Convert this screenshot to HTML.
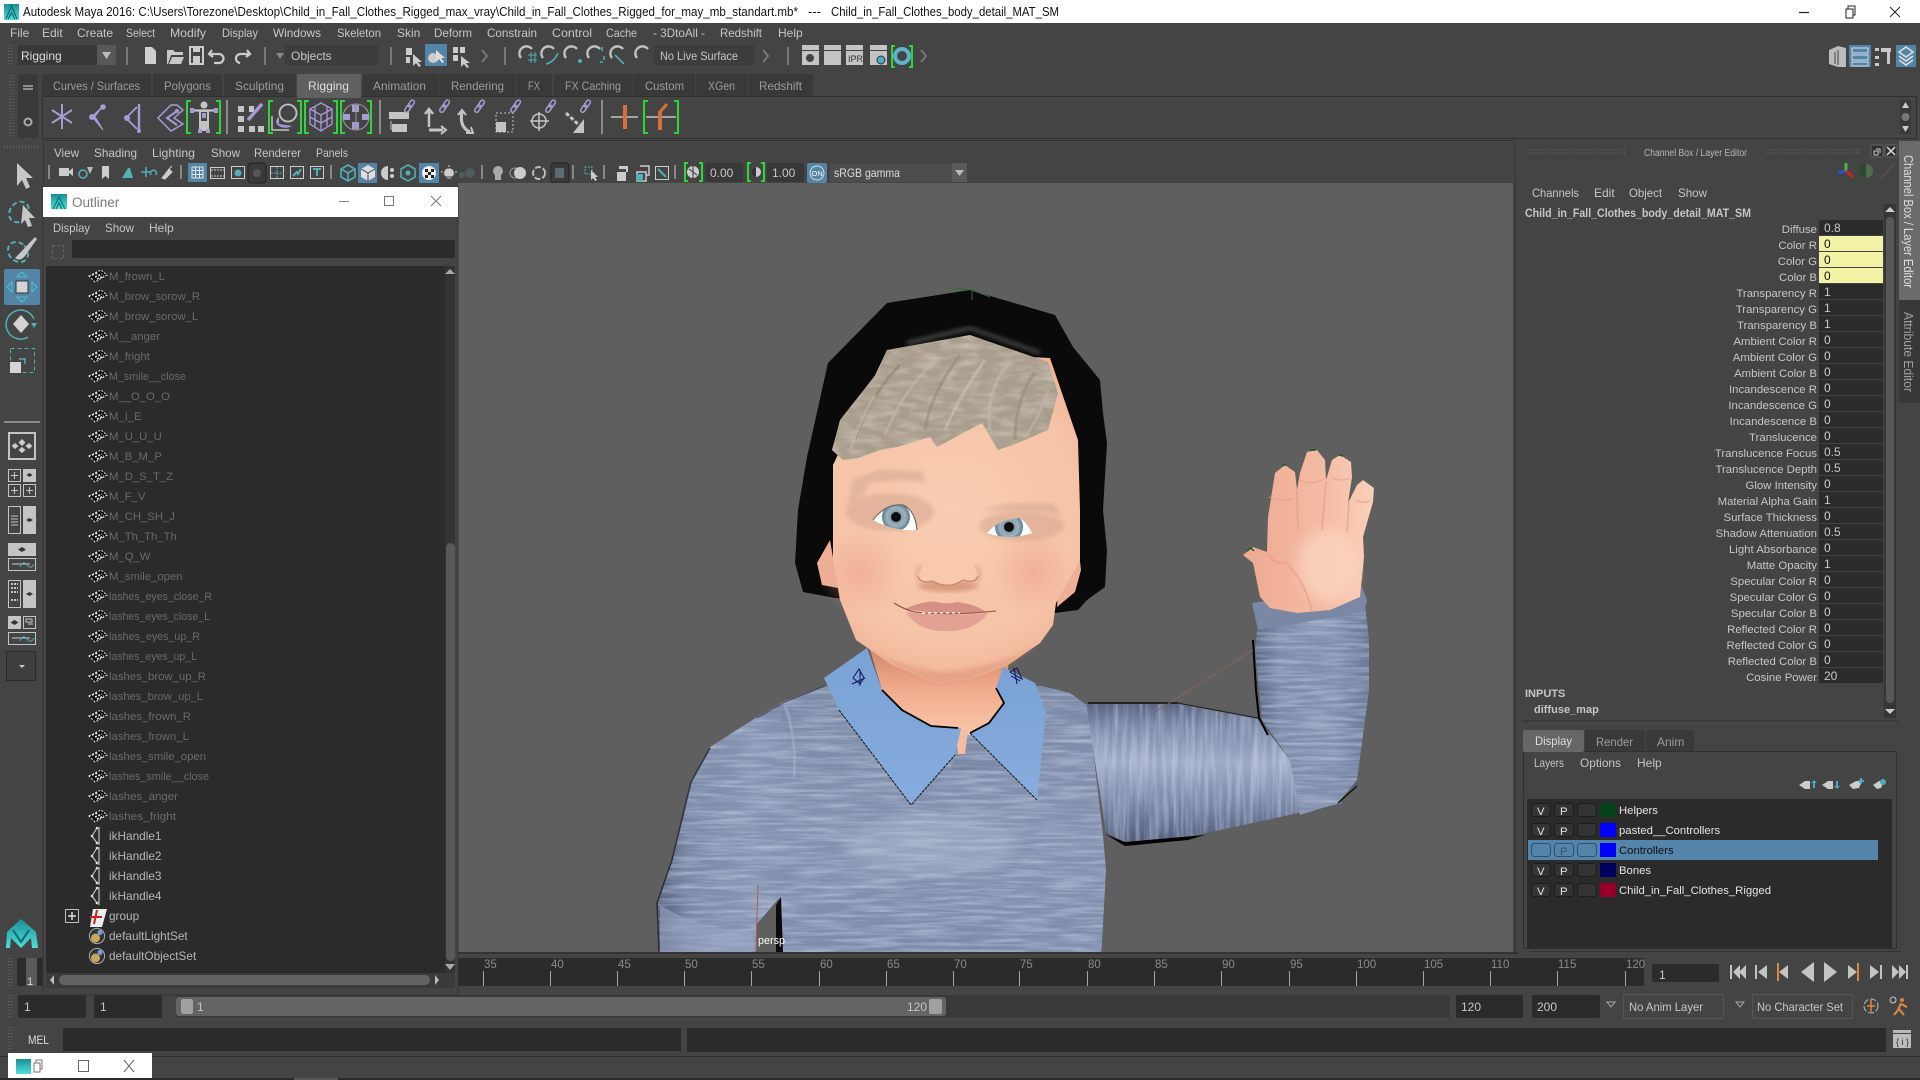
<!DOCTYPE html>
<html lang="en"><head><meta charset="utf-8"><title>Autodesk Maya 2016</title>
<style>
html,body{margin:0;padding:0;background:#444;width:1920px;height:1080px;overflow:hidden}
svg{position:absolute;left:0;top:0;font-family:"Liberation Sans",sans-serif;font-size:12px}
text{fill:#c6c6c6;white-space:pre}
.t{fill:#9c9c9c}.d{fill:#6a6a6a;font-size:11.3px}.o{fill:#b6b6b6;font-size:11.8px}.n{fill:#8a8a8a;font-size:11.5px}.k{fill:#e4e4e4;font-size:11.3px}.v{fill:#c8c8c8}.lb{font-size:11.4px}
.g{fill:none;stroke:#c4c4c4;stroke-width:2}.l{fill:none;stroke:#a79bd6;stroke-width:2}.c{fill:none;stroke:#4fb0b8;stroke-width:1.6}.br{fill:none;stroke:#2fd63a;stroke-width:2}.s{stroke:#777;stroke-width:2;fill:none}.h{stroke:#6d6d6d;stroke-width:1;stroke-dasharray:1 2;fill:none}
</style></head><body>
<svg width="1920" height="1080" viewBox="0 0 1920 1080" xmlns="http://www.w3.org/2000/svg">
<defs>
<filter id="knit" x="0" y="0" width="1" height="1" color-interpolation-filters="sRGB"><feTurbulence type="fractalNoise" baseFrequency="0.02 0.28" numOctaves="3" seed="5"/><feColorMatrix values="0 0 0 0 .82 0 0 0 0 .85 0 0 0 0 .93 1.1 0 0 0 -.42"/><feComposite in2="SourceAlpha" operator="in"/><feBlend in2="SourceGraphic" mode="normal"/></filter>
<filter id="knitv" x="0" y="0" width="1" height="1" color-interpolation-filters="sRGB"><feTurbulence type="fractalNoise" baseFrequency="0.22 0.015" numOctaves="3" seed="9"/><feColorMatrix values="0 0 0 0 .82 0 0 0 0 .85 0 0 0 0 .93 1.1 0 0 0 -.42"/><feComposite in2="SourceAlpha" operator="in"/><feBlend in2="SourceGraphic" mode="normal"/></filter>
<filter id="hairf" x="0" y="0" width="1" height="1" color-interpolation-filters="sRGB"><feTurbulence type="fractalNoise" baseFrequency="0.05 0.16" numOctaves="2" seed="3"/><feColorMatrix values="0 0 0 0 .85 0 0 0 0 .81 0 0 0 0 .76 1.2 0 0 0 -.46"/><feComposite in2="SourceAlpha" operator="in"/><feBlend in2="SourceGraphic" mode="normal"/></filter>
<filter id="bl"><feGaussianBlur stdDeviation="6"/></filter>
<filter id="bl2"><feGaussianBlur stdDeviation="2"/></filter>
<linearGradient id="torso2" x1="0" x2="0" y1="0" y2="1"><stop offset="0" stop-color="#7b89a6"/><stop offset=".55" stop-color="#8593b0"/><stop offset="1" stop-color="#7e8cab"/></linearGradient>
<linearGradient id="arm" x1="0" x2="0" y1="0" y2="1"><stop offset="0" stop-color="#5a6684"/><stop offset=".16" stop-color="#7c8aa8"/><stop offset=".42" stop-color="#9fabc6"/><stop offset=".72" stop-color="#7a88a7"/><stop offset="1" stop-color="#4e5a78"/></linearGradient>
<linearGradient id="fore" x1="0" x2="1" y1="0" y2="0"><stop offset="0" stop-color="#5a6684"/><stop offset=".22" stop-color="#7f8dab"/><stop offset=".7" stop-color="#8391af"/><stop offset="1" stop-color="#6a789a"/></linearGradient>
<linearGradient id="larm" x1="0" x2="1" y1="0" y2="0"><stop offset="0" stop-color="#515d7a"/><stop offset=".22" stop-color="#7a88a6"/><stop offset=".7" stop-color="#8896b3"/><stop offset="1" stop-color="#818fad"/></linearGradient>
<linearGradient id="coll" x1="0" x2="0" y1="0" y2="1"><stop offset="0" stop-color="#7aa2d4"/><stop offset="1" stop-color="#87acdd"/></linearGradient>
<radialGradient id="skin" gradientUnits="userSpaceOnUse" cx="950" cy="510" r="190"><stop offset="0" stop-color="#f8cdb2"/><stop offset=".7" stop-color="#f6c3a6"/><stop offset="1" stop-color="#eeb093"/></radialGradient>
<radialGradient id="cheek"><stop offset="0" stop-color="#ec9c88" stop-opacity=".5"/><stop offset="1" stop-color="#ec9c88" stop-opacity="0"/></radialGradient>
<radialGradient id="iris"><stop offset="0" stop-color="#5f7a8c"/><stop offset=".65" stop-color="#9db2c0"/><stop offset="1" stop-color="#5e7c90"/></radialGradient>
<linearGradient id="neck" x1="0" x2="0" y1="0" y2="1"><stop offset="0" stop-color="#cf7f64"/><stop offset=".5" stop-color="#f0a98c"/><stop offset="1" stop-color="#f9c7a8"/></linearGradient>
<linearGradient id="hand" x1="0" x2="1" y1="0" y2="0"><stop offset="0" stop-color="#eea991"/><stop offset=".6" stop-color="#f4bba4"/><stop offset="1" stop-color="#fbcfb8"/></linearGradient>
<linearGradient id="logo" x1="0" x2="0" y1="0" y2="1"><stop offset="0" stop-color="#1a8f9a"/><stop offset="1" stop-color="#4fe0d8"/></linearGradient>
<pattern id="rows" width="64" height="16" patternUnits="userSpaceOnUse" x="1819" y="220"><rect width="64" height="15" fill="#2b2b2b"/></pattern>
<clipPath id="eL"><path d="M873 520Q886 503 903 505Q915 510 917 530Q895 532 873 520z"/></clipPath>
<clipPath id="eR"><path d="M987 533Q1000 518 1020 518Q1028 524 1032 533Q1010 541 987 533z"/></clipPath>
<g id="m"><path d="M-9 0L3 -6L9 -1L-3 6z" fill="#111" stroke="#eee" stroke-width="1" stroke-dasharray="2 1.5"/><path d="M-6 -1L0 -3M-3 1L4 -2M-1 3L6 0" stroke="#e8e8e8" stroke-width="1.6" stroke-dasharray="2 1.5"/></g>
<g id="ik"><path d="M-1 -8L-6 0L-1 7M1 -9V9" fill="none" stroke="#ccc" stroke-width="1.1"/><circle cx="-6" cy="0" r="1.3" fill="#ddd"/><circle cx="-1" cy="-8" r="1.3" fill="#ddd"/><circle cx="-1" cy="7" r="1.3" fill="#ddd"/></g>
<g id="set"><circle r="7.6" fill="#333" stroke="#aaa"/><circle cx="-1.5" cy="2" r="4.5" fill="#c9a65c"/><circle cx="3" cy="-3.5" r="2.6" fill="#6d9fd1"/></g>
<g id="mag"><path d="M-6 4A7 7 0 1 1 5 -5" fill="none" stroke="#c0c0c0" stroke-width="2.4"/></g>
<g id="link"><rect x="-2" y="-8" width="4" height="8" rx="2" transform="rotate(35)" fill="none" stroke="#a79bd6" stroke-width="1.5"/><rect x="-2" y="-2" width="4" height="8" rx="2" transform="rotate(35)" fill="none" stroke="#a79bd6" stroke-width="1.5"/></g>
</defs>

<rect width="1920" height="1080" fill="#444"/>

<!-- Title bar -->
<rect width="1920" height="23" fill="#fff"/>
<rect x="4" y="4" width="15" height="16" fill="url(#logo)"/><path d="M6 19L11.500 6L17 19M8 19L11.500 13L15 19" fill="none" stroke="#0a5b66"/>
<text x="23" y="16" style="fill:#111;font-size:13px" textLength="775" lengthAdjust="spacingAndGlyphs">Autodesk Maya 2016: C:\Users\Torezone\Desktop\Child_in_Fall_Clothes_Rigged_max_vray\Child_in_Fall_Clothes_Rigged_for_may_mb_standart.mb*</text>
<text x="808" y="16" style="fill:#111;font-size:13px">---</text>
<text x="831" y="16" style="fill:#111;font-size:13px" textLength="228" lengthAdjust="spacingAndGlyphs">Child_in_Fall_Clothes_body_detail_MAT_SM</text>
<path d="M1799 12.500h10" stroke="#222" stroke-width="1.200"/>
<path d="M1846 9h7v9h-7zM1848 9V6h7v9h-2" fill="none" stroke="#222"/>
<path d="M1890 7l10 10M1900 7l-10 10" stroke="#222"/>

<!-- Menu -->
<g>
<text x="10" y="37">File</text><text x="42" y="37">Edit</text><text x="77" y="37">Create</text><text x="126" y="37" textLength="29" lengthAdjust="spacingAndGlyphs">Select</text><text x="170" y="37" textLength="36" lengthAdjust="spacingAndGlyphs">Modify</text><text x="222" y="37" textLength="36" lengthAdjust="spacingAndGlyphs">Display</text><text x="273" y="37" textLength="48" lengthAdjust="spacingAndGlyphs">Windows</text><text x="337" y="37" textLength="44" lengthAdjust="spacingAndGlyphs">Skeleton</text><text x="397" y="37">Skin</text><text x="434" y="37" textLength="38" lengthAdjust="spacingAndGlyphs">Deform</text><text x="487" y="37" textLength="50" lengthAdjust="spacingAndGlyphs">Constrain</text><text x="552" y="37" textLength="40" lengthAdjust="spacingAndGlyphs">Control</text><text x="606" y="37" textLength="31" lengthAdjust="spacingAndGlyphs">Cache</text><text x="653" y="37" textLength="52" lengthAdjust="spacingAndGlyphs">- 3DtoAll -</text><text x="720" y="37" textLength="42" lengthAdjust="spacingAndGlyphs">Redshift</text><text x="778" y="37">Help</text>
</g>

<!-- Status line -->
<path class="h" d="M9 45v21M12 45v21"/>
<rect x="18" y="45" width="79" height="20" fill="#383838"/><rect x="97" y="45" width="19" height="20" fill="#585858"/>
<text x="21" y="60" style="fill:#ddd">Rigging</text><path d="M102 52h9l-4.500 7z" fill="#bbb"/>
<path class="s" d="M127 47v18M265 47v18M391 47v18M505 47v18M788 47v18"/>
<path d="M145 47h7l4 4v13h-11z" fill="#d0d0d0"/>
<path d="M167 50h6l2 2h8v3h-12l-3 9h-1zM172 57h12l-3 7h-12z" fill="#c8c8c8"/>
<path d="M190 47h13v17h-13z" fill="none" stroke="#ccc" stroke-width="2"/><rect x="193" y="47" width="7" height="5" fill="#ccc"/><rect x="193" y="56" width="7" height="8" fill="#ccc"/>
<path d="M212 50l-3 4 4 3M210 54h9a4 4 0 0 1 0 9h-5" fill="none" stroke="#ccc" stroke-width="2.200"/>
<path d="M247 50l3 4-4 3M249 54h-8a4 4 0 0 0-1 9" fill="none" stroke="#ccc" stroke-width="2.200"/>
<path d="M276 53h8l-4 6z" fill="#888"/>
<rect x="285" y="45" width="93" height="20" fill="#3d3d3d"/><text x="291" y="60">Objects</text>
<path d="M406 48h6v7h-6zM406 57h4v6h-4z" fill="#ccc"/><path d="M413 54l0 12 3-3 3 4 2-1-3-4h4z" fill="#ccc"/>
<rect x="425" y="44" width="22" height="22" fill="#5285a6"/><circle cx="433" cy="58" r="5" fill="#ccc"/><path d="M436 50l0 12 3-3 3 4 2-1-3-4h4z" fill="#ddd"/>
<path d="M453 47h5v6h-5zM460 47h5v6h-5zM453 55h5v6h-5z" fill="#ccc"/><path d="M461 56l0 11 3-3 3 4 2-1-3-4h4z" fill="#ccc"/>
<path d="M482 50l5 6-5 6" class="s"/>
<use href="#mag" x="527" y="54"/><path d="M528 55h9M528 60h9M531 52v11M535 52v11" stroke="#4fb0b8"/>
<use href="#mag" x="549" y="54"/><path d="M546 64q8-2 12-11" class="c"/>
<use href="#mag" x="572" y="54"/><circle cx="580" cy="61" r="2" fill="#4fb0b8"/>
<use href="#mag" x="595" y="54"/><path d="M602 47v4M604 56v4M600 62h3" stroke="#4fb0b8" stroke-width="1.500"/>
<use href="#mag" x="618" y="54"/><path d="M615 55l9 9" class="c"/>
<use href="#mag" x="643" y="54"/>
<rect x="654" y="45" width="100" height="20" fill="#3d3d3d"/><text x="660" y="60" textLength="78" lengthAdjust="spacingAndGlyphs">No Live Surface</text>
<path d="M763 50l5 6-5 6" class="s"/>
<g fill="#c4c4c4"><rect x="802" y="45" width="17" height="5"/><rect x="802" y="51" width="17" height="14"/><rect x="824" y="45" width="17" height="5"/><rect x="824" y="51" width="17" height="14"/><rect x="846" y="45" width="17" height="5"/><rect x="846" y="51" width="17" height="14"/><rect x="870" y="45" width="17" height="5"/><rect x="870" y="51" width="17" height="14"/></g>
<circle cx="810" cy="58" r="4" fill="#444"/><text x="848" y="62" style="fill:#333;font-size:9px">IPR</text><circle cx="881" cy="60" r="4" fill="#4fa9c9" stroke="#333"/>
<circle cx="902" cy="56" r="7" fill="none" stroke="#5fb0c9" stroke-width="4"/><path class="br" d="M895 46h-3v21h3M909 46h3v21h-3"/>
<path d="M921 50l5 6-5 6" class="s"/>
<!-- right status icons -->
<path d="M1829 50l9-4 8 2v19h-8l-9-3z" fill="#bcbcbc"/><path d="M1835 52v12M1838 50v15" stroke="#444"/>
<rect x="1849" y="45" width="22" height="22" fill="#5285a6"/><path d="M1852 48h16v5h-16zM1852 55h16v5h-16zM1852 62h16v4h-16z" fill="none" stroke="#dde"/>
<path d="M1875 48h4v3h-4zM1875 56h4v3h-4zM1875 63h4v3h-4zM1881 48h10v4h-10zM1887 52h3v12h-3z" fill="#c8c8c8"/>
<rect x="1896" y="45" width="20" height="22" fill="#5285a6"/><path d="M1906 47l7 5-7 5-7-5zM1899 56l7 5 7-5M1899 60l7 5 7-5" fill="none" stroke="#ddd" stroke-width="1.600"/>

<!-- Shelf -->
<rect x="18" y="74" width="20" height="64" fill="#3a3a3a"/>
<path class="h" d="M10 75v62M13 75v62"/>
<path d="M23 86h10M23 89h10" stroke="#aaa" stroke-width="1.500"/><circle cx="28" cy="122" r="3.500" fill="none" stroke="#aaa" stroke-width="2"/>
<g fill="#393939">
<rect x="42" y="74" width="109" height="22"/><rect x="153" y="74" width="69" height="22"/><rect x="224" y="74" width="72" height="22"/><rect x="363" y="74" width="75" height="22"/><rect x="439" y="74" width="77" height="22"/><rect x="517" y="74" width="35" height="22"/><rect x="554" y="74" width="79" height="22"/><rect x="634" y="74" width="61" height="22"/><rect x="696" y="74" width="52" height="22"/><rect x="749" y="74" width="64" height="22"/>
</g>
<rect x="297" y="74" width="64" height="23" fill="#606060"/>
<g>
<text class="t" x="53" y="90" textLength="87" lengthAdjust="spacingAndGlyphs">Curves / Surfaces</text><text class="t" x="164" y="90" textLength="47" lengthAdjust="spacingAndGlyphs">Polygons</text><text class="t" x="235" y="90" textLength="49" lengthAdjust="spacingAndGlyphs">Sculpting</text><text x="308" y="90" style="fill:#ddd" textLength="41" lengthAdjust="spacingAndGlyphs">Rigging</text><text class="t" x="373" y="90" textLength="53" lengthAdjust="spacingAndGlyphs">Animation</text><text class="t" x="451" y="90" textLength="53" lengthAdjust="spacingAndGlyphs">Rendering</text><text class="t" x="528" y="90" textLength="12" lengthAdjust="spacingAndGlyphs">FX</text><text class="t" x="565" y="90" textLength="56" lengthAdjust="spacingAndGlyphs">FX Caching</text><text class="t" x="645" y="90" textLength="39" lengthAdjust="spacingAndGlyphs">Custom</text><text class="t" x="708" y="90" textLength="27" lengthAdjust="spacingAndGlyphs">XGen</text><text class="t" x="759" y="90" textLength="43" lengthAdjust="spacingAndGlyphs">Redshift</text></g>
<rect x="42.500" y="96.500" width="1874" height="42" fill="#444" stroke="#303030"/>
<rect x="297" y="96" width="64" height="2" fill="#606060"/>
<rect x="1900" y="100" width="11" height="34" fill="#3a3a3a"/><path d="M1902 108l3.500-6 3.500 6zM1902 126h7l-3.500 6z" fill="#ccc"/><circle cx="1905.500" cy="117" r="4" fill="#777"/>
<!-- shelf icons -->
<path class="l" d="M62 104v25M52 110l20 13M72 110l-20 13"/>
<path d="M103 106L92 116.500L103 130L95 116.500z" fill="#a79bd6" stroke="#a79bd6"/><circle cx="103" cy="107" r="2.800" fill="#a79bd6"/><circle cx="92" cy="117" r="3" fill="#a79bd6"/>
<path d="M139 104v28" stroke="#a79bd6" stroke-width="2.400"/><path d="M137 107L126 118L137 129" fill="none" stroke="#a79bd6" stroke-width="1.800"/><circle cx="127" cy="118" r="3" fill="#a79bd6"/><circle cx="139" cy="131" r="2" fill="#a79bd6"/>
<path d="M171 105L158 118L171 131L183 124L174 118L183 110L177 105z" fill="none" stroke="#a79bd6" stroke-width="1.500"/><path d="M177 111L167 118L177 125" fill="none" stroke="#a79bd6" stroke-width="2"/><circle cx="177" cy="111" r="2" fill="#a79bd6"/>
<path class="br" d="M191 101h-4v32h4M216 101h4v32h-4"/><circle cx="204" cy="105" r="3.500" fill="#c4c4c4"/><path d="M190 110.500h28" stroke="#c4c4c4" stroke-width="2.200"/><path d="M190 108h4v5h-4zM214 108h4v5h-4z" fill="#a79bd6"/><rect x="200" y="111" width="8" height="11" fill="none" stroke="#c4c4c4" stroke-width="2"/><rect x="202" y="113" width="4" height="5" fill="#a79bd6"/><path d="M199 122h10v9h-10z" fill="#c4c4c4"/><path d="M198 129h4v4h-4zM206 129h4v4h-4z" fill="#a79bd6"/>
<path class="s" d="M227 100v34M380 100v34M602 100v34" style="stroke:#8a8a8a"/>
<g fill="#c4c4c4"><rect x="238" y="106" width="6" height="6"/><rect x="249" y="106" width="5" height="6"/><rect x="238" y="116" width="6" height="6"/><rect x="238" y="126" width="6" height="6"/><rect x="249" y="126" width="6" height="6"/><rect x="258" y="126" width="6" height="6"/></g>
<path d="M248 120L262 104" stroke="#a79bd6" stroke-width="3.500"/>
<path class="br" d="M273 101h-4v32h4M297 101h4v32h-4"/><circle cx="288" cy="113" r="8.500" fill="none" stroke="#c4c4c4" stroke-width="1.800"/><path d="M279 117a9 6 0 0 0 13 9l-13-2z" fill="#a79bd6"/><path d="M272 116v14h17" fill="none" stroke="#c4c4c4" stroke-width="1.500"/>
<path class="br" d="M309 101h-4v32h4M333 101h4v32h-4"/><path d="M321 103l11 6v15l-11 7-11-7v-15zM310 109l11 6 11-6M321 115v16M310 117l11 6 11-6M315 106v20M327 106v20" fill="none" stroke="#a79bd6" stroke-width="1.300"/>
<path class="br" d="M345 101h-4v32h4M367 101h4v32h-4"/><circle cx="356" cy="117" r="13" fill="none" stroke="#999" stroke-width="1.100"/><path d="M352 105h7v7h-7zM343 114h7v6h-7zM362 114h7v6h-7zM352 122h7v7h-7z" fill="#a79bd6"/><path d="M356 104v26" stroke="#999"/>
<path d="M389 112h20v7h-20zM392 124h15v8h-15z" fill="#c4c4c4"/><path d="M391 121v9" stroke="#c4c4c4"/><use href="#link" x="409" y="107"/>
<path d="M429 127v-16M425 114l4-5 4 5" class="g" style="stroke-width:2.500"/><path d="M429 130h14" class="g" style="stroke-width:3"/><path d="M441 126l5 4-5 4" class="g"/><use href="#link" x="444" y="107"/>
<path d="M462 112q-3 15 8 20" class="g" style="stroke-width:3"/><path d="M466 133l7 0-2-6" class="g"/><path d="M458 115l4-5 4 5" class="g"/><use href="#link" x="479" y="107"/>
<rect x="496" y="113" width="17" height="19" fill="none" stroke="#c4c4c4" stroke-dasharray="2 2"/><rect x="496" y="122" width="10" height="10" fill="#c4c4c4"/><use href="#link" x="515" y="107"/>
<circle cx="539" cy="121" r="7" class="g" style="stroke-width:1.500"/><path d="M539 112v19M530 121h19" stroke="#c4c4c4" stroke-width="1.500"/><use href="#link" x="550" y="107"/>
<path d="M566 113l13 12" class="g" style="stroke-width:3" stroke-dasharray="4 2"/><path d="M584 119v14h-11z" fill="#c4c4c4"/><use href="#link" x="585" y="107"/>
<path d="M611 117h27" stroke="#c4c4c4" stroke-width="1.500"/><path d="M625 105v24" stroke="#d86f3a" stroke-width="4"/>
<path class="br" d="M648 101h-4v32h4M674 101h4v32h-4"/><path d="M646 117h30" stroke="#c4c4c4" stroke-width="1.500"/><path d="M660 111v19" stroke="#d86f3a" stroke-width="4"/><path d="M659 113l8-9" stroke="#d86f3a" stroke-width="3"/>

<!-- Panel bar -->
<path d="M43.500 141V187" stroke="#333"/>
<path d="M44 140.500H1513" stroke="#333"/>
<path class="h" d="M4 146h36M4 148h36"/>
<text x="54" y="157" textLength="25" lengthAdjust="spacingAndGlyphs">View</text><text x="94" y="157" textLength="43" lengthAdjust="spacingAndGlyphs">Shading</text><text x="152" y="157" textLength="43" lengthAdjust="spacingAndGlyphs">Lighting</text><text x="211" y="157" textLength="29" lengthAdjust="spacingAndGlyphs">Show</text><text x="254" y="157" textLength="47" lengthAdjust="spacingAndGlyphs">Renderer</text><text x="316" y="157" textLength="32" lengthAdjust="spacingAndGlyphs">Panels</text>
<path d="M49 165v14M181 165v14M331 165v14M482 165v14M573 165v14M604 165v14M675 165v14" stroke="#888" stroke-width="2"/>
<path d="M59 168h10v8h-10zM69 171l4-3v8l-4-3z" fill="#ccc"/>
<circle cx="83" cy="174" r="4" class="c"/><path d="M87 167h6l-3 7z" fill="#bbb"/>
<path d="M102 166h7v13l-3.500-3-3.500 3z" fill="#ccc"/>
<path d="M122 178h11l-3-10h-2zM127 166l-4 13" fill="#4fb0b8"/>
<path d="M141 172h10M146 167v10M151 175a3 3 0 1 1 5 0" class="c"/>
<path d="M162 178l7-9 3 3-7 7zM172 166l-4 4" fill="#ccc" stroke="#ccc"/>
<rect x="188" y="163" width="19" height="19" fill="#5285a6"/><path d="M192 167h11v11h-11zM192 170.500h11M192 174.500h11M195.500 167v11M199.500 167v11" fill="none" stroke="#e5e5e5"/>
<rect x="210.500" y="167.500" width="14" height="11" fill="none" stroke="#ccc"/><path d="M211 170h13M211 176h13" stroke="#ccc" stroke-dasharray="2 1"/>
<rect x="231.500" y="166.500" width="13" height="12" fill="none" stroke="#ccc"/><circle cx="238" cy="173" r="3.500" fill="#4fb0b8"/>
<rect x="248" y="163" width="18" height="20" rx="3" fill="#3a3a3a" stroke="#222"/><circle cx="257" cy="173" r="4" fill="#555"/>
<rect x="270.500" y="166.500" width="13" height="12" fill="none" stroke="#ccc"/><path d="M271 173h13M277 167v12" stroke="#4fb0b8" stroke-dasharray="2 1"/>
<rect x="290.500" y="166.500" width="13" height="12" fill="none" stroke="#ccc"/><path d="M293 176l4-4 1 2 3-5" stroke="#4fb0b8" stroke-width="2" fill="none"/>
<rect x="310.500" y="166.500" width="13" height="12" fill="none" stroke="#ccc"/><path d="M313 169h8M317 169v7" stroke="#4fb0b8" stroke-width="2"/>
<path d="M348 165l7 4v8l-7 4-7-4v-8zM341 169l7 4 7-4M348 173v8" class="c"/>
<rect x="358" y="163" width="19" height="20" fill="#5285a6"/><path d="M368 165l7 4v8l-7 4-7-4v-8z" fill="#ddd"/><path d="M361 169l7 4 7-4M368 173v8" stroke="#444" fill="none"/>
<path d="M388 166a7 7 0 0 0 0 14z" fill="#ccc"/><circle cx="392" cy="170" r="2" fill="#ccc"/><circle cx="392" cy="176" r="2" fill="#ccc"/>
<path d="M408 165l7 4v8l-7 4-7-4v-8z" class="c"/><circle cx="408" cy="173" r="2.500" fill="#4fb0b8"/>
<rect x="419" y="163" width="20" height="20" fill="#5285a6"/><circle cx="429" cy="173" r="7" fill="#eee"/><path d="M425 169h3v3h-3zM431 169h3v3h-3zM428 172h3v3h-3zM425 175h3v3h-3zM431 175h3v3h-3z" fill="#222"/>
<path d="M449 165v2M443 172h-2M457 172h-2M449 169a4 4 0 0 1 3 7h-6a4 4 0 0 1 3-7zM447 178h4" stroke="#ccc" fill="#ccc"/>
<circle cx="470" cy="173" r="5" fill="#4f5a5c"/><circle cx="462" cy="175" r="3" fill="#4f5a5c"/>
<circle cx="498" cy="171" r="5" fill="#aaa"/><rect x="495" y="175" width="6" height="5" fill="#aaa"/>
<circle cx="515" cy="173" r="5" fill="none" stroke="#999"/><circle cx="520" cy="173" r="6" fill="#ccc"/>
<circle cx="539" cy="173" r="6" fill="none" stroke="#bbb" stroke-width="2" stroke-dasharray="6 2"/>
<rect x="551" y="163" width="18" height="20" rx="3" fill="#3a3a3a" stroke="#222"/><rect x="555" y="168" width="9" height="10" fill="#5e6a6e"/>
<path d="M585 167h7v7h-7z" fill="none" stroke="#4fb0b8" stroke-dasharray="2 1"/><path d="M591 170l0 10 2-2 2 3 2-1-2-3h3z" fill="#ccc"/>
<path d="M617 172h9v9h-9zM619 166h9v6h-2v-3h-7z" fill="#ccc"/>
<path d="M637 172h9v9h-9zM640 166h9v9h-3" fill="none" stroke="#ccc" stroke-width="1.500"/><rect x="636" y="174" width="7" height="7" fill="#4fb0b8"/>
<rect x="655.500" y="166.500" width="13" height="13" fill="none" stroke="#ccc"/><path d="M658 169l8 8" stroke="#4fb0b8" stroke-width="2"/>
<circle cx="693" cy="172" r="6" fill="#ccc"/><path d="M689 169l8 6M693 166v12" stroke="#333"/><path class="br" d="M688 163h-3v18h3M699 163h3v18h-3"/>
<rect x="705" y="163" width="38" height="19" rx="2" fill="#383838"/><text x="710" y="177">0.00</text>
<circle cx="756" cy="172" r="5" fill="#ccc"/><path d="M756 167a5 5 0 0 0 0 10z" fill="#333"/><path class="br" d="M751 163h-3v18h3M761 163h3v18h-3"/>
<rect x="767" y="163" width="37" height="19" rx="2" fill="#383838"/><text x="772" y="177">1.00</text>
<rect x="807" y="163" width="20" height="20" rx="2" fill="#5285a6"/><circle cx="817" cy="173" r="7" fill="none" stroke="#ddd"/><text x="811.500" y="176" style="fill:#fff;font-size:7.500px">ON</text>
<rect x="830" y="163" width="122" height="19" fill="#4d4d4d"/><rect x="952" y="163" width="15" height="19" fill="#5a5a5a"/><text x="834" y="177" style="fill:#ddd" textLength="66" lengthAdjust="spacingAndGlyphs">sRGB gamma</text><path d="M955 170h9l-4.500 6z" fill="#bbb"/>

<!-- Viewport -->
<rect x="458" y="183" width="1055" height="769" fill="#5f5f5f"/>

<!-- Character -->
<clipPath id="vp"><rect x="458" y="183" width="1055" height="769"/></clipPath>
<g clip-path="url(#vp)">
<!-- Torso and left arm -->
<path d="M825 686L785 701L757 717L710 747L691 782L672 860L658 903L660 960H1101L1106 870L1103 835L1088 706L1070 693L1042 686z" fill="url(#torso2)" filter="url(#knit)"/>
<path d="M710 748L691 782L672 860L658 903L660 960H752L757 930L775 900L779 860L785 800L792 752L780 712L757 718z" fill="url(#larm)" filter="url(#knit)"/>
<path d="M785 705Q797 740 794 778" stroke="#aab4cb" stroke-width="3" fill="none" opacity=".5"/>
<path d="M660 905Q700 930 755 932L752 960H660z" fill="#98a4bf" opacity=".6"/>
<path d="M780 897L756 925L756 952H776L776 907z" fill="#5f5f5f"/>
<path d="M776 905L781 897L783 952L776 952z" fill="#0b0b0b"/>
<ellipse cx="930" cy="845" rx="85" ry="30" fill="#b3bed4" opacity=".4" filter="url(#bl)"/>
<path d="M955 760H1020Q1000 770 960 770Q945 770 955 760z" fill="#6c7a98" opacity=".5"/>
<path d="M710 748L691 782L672 860L657 903L659 952" fill="none" stroke="#1c2030" stroke-width="1.500" opacity=".8"/>
<path d="M757 718L785 702L825 686" fill="none" stroke="#1c2030" stroke-width="1" opacity=".6"/>
<!-- Raised arm -->
<path d="M1086 704L1178 704L1258 719L1290 760L1342 803L1280 817L1188 837L1125 843L1106 832z" fill="url(#arm)" filter="url(#knitv)"/>
<path d="M1259 612L1364 596L1369 640L1369 690L1357 780L1338 803L1300 815L1290 760L1262 720L1255 650z" fill="url(#fore)" filter="url(#knit)"/>
<path d="M1252 603L1362 587L1367 600L1364 612L1258 630z" fill="#7a88a6"/>
<path d="M1105 834L1125 846L1188 840L1205 835L1125 842z" fill="#000"/>
<path d="M1253 640L1256 690L1259 718L1268 735" fill="none" stroke="#000" stroke-width="2"/>
<path d="M1088 703L1178 703" stroke="#111" stroke-width="1.500"/><path d="M1178 703L1258 718" stroke="#222" stroke-width="1"/>
<path d="M1338 803L1357 786" stroke="#111" stroke-width="1.500"/>
<!-- Hand -->
<path d="M1243 555L1253 547L1267 552L1268 517L1275 473L1285 465L1295 472L1297 490L1300 473L1307 452L1317 450L1325 460L1326 480L1332 460L1340 455L1351 462L1352 477L1348 503L1357 485L1363 480L1374 488L1373 502L1363 537L1364 557L1360 597L1330 610L1297 613L1270 608L1260 597L1253 563z" fill="url(#hand)"/>
<ellipse cx="1328" cy="565" rx="30" ry="35" fill="#fdd8c4" opacity=".7" filter="url(#bl)"/>
<path d="M1267 553Q1275 565 1285 562Q1305 580 1312 612" fill="none" stroke="#e49c83" stroke-width="2" opacity=".6"/>
<path d="M1297 491L1298 530M1326 481L1322 530M1349 503L1347 532" stroke="#e09a82" stroke-width="2" opacity=".5"/>
<path d="M1269 497q12 6 24 1M1299 480q12 6 25-1M1332 478q10 4 18 0M1356 500q6 4 14 1" fill="none" stroke="#e3a08a" stroke-width="1.500" opacity=".6"/>
<path d="M1247 551l4-3 3 3M1282 465l4 0M1339 455l4 1M1310 450l6 0" stroke="#1c5a28" stroke-width="1.500" fill="none"/>
<!-- Neck -->
<path d="M867 640L1010 650L1004 703L985 726L970 735L958 735L931 727L902 710L882 690z" fill="url(#neck)"/>
<path d="M955 730h13l-3 24h-7z" fill="#f5bca0"/>
<!-- Collar -->
<path d="M867 648L824 678L839 710L911 805L955 755L961 728L931 726L902 710L882 690z" fill="url(#coll)"/>
<path d="M1003 667L996 688L1004 703L989 723L970 733L1037 800L1046 712L1035 683z" fill="url(#coll)"/>
<path d="M839 710L911 805L955 755M970 733L1037 800" fill="none" stroke="#141414" stroke-width="1" stroke-dasharray="3 1"/>
<path d="M882 690L902 710L931 726L958 728M970 733L989 723L1004 703L996 688" fill="none" stroke="#000" stroke-width="1.800"/>
<path d="M853 678l6-9 5 9-4 6zM852 684l13-6M860 670v16" fill="none" stroke="#12125f"/>
<path d="M1010 672l7-4 5 11zM1014 668l3 16M1011 676l9 5" fill="none" stroke="#12125f"/>
<!-- red wires -->
<path d="M1253 650L1155 712" stroke="#8c6358" stroke-width="1"/>
<path d="M758 885L756 952" stroke="#a0665a" stroke-width="1"/>
<!-- Hat -->
<path d="M887 303L970 290L1055 315L1073 347L1100 380L1103 413L1107 443L1103 510L1107 550L1105 587L1087 600L1078 610L1055 613L835 598L803 592L795 563L798 510L807 457L828 363z" fill="#0a0a0a"/>
<path d="M907 343L970 328L1040 353" fill="none" stroke="#555" stroke-width="3" filter="url(#bl2)"/>
<path d="M950 288L972 290M972 290L990 297M972 290V300" stroke="#2f6a3a" fill="none"/>
<!-- Ears -->
<path d="M830 540L817 563L822 585L838 588z" fill="#eeb195"/><path d="M1077 537L1081 570L1075 592L1057 607L1060 560z" fill="#eeb195"/>
<!-- Face -->
<path d="M887 350L1050 358L1078 440L1080 510L1080 560L1056 603L1053 625L1040 643L1008 665L970 680L936 684L892 665L856 640L840 600L833 560L833 465z" fill="url(#skin)"/>
<ellipse cx="860" cy="572" rx="42" ry="42" fill="url(#cheek)"/><ellipse cx="1033" cy="572" rx="40" ry="42" fill="url(#cheek)"/>
<path d="M856 640Q900 672 936 684L970 680L1008 665L1040 643Q1000 668 940 672Q890 665 856 640z" fill="#d98a6e" opacity=".45" filter="url(#bl2)"/>
<!-- brows -->
<ellipse cx="890" cy="512" rx="44" ry="19" fill="#c49782" opacity=".38" filter="url(#bl2)"/>
<ellipse cx="1022" cy="526" rx="42" ry="15" fill="#c49782" opacity=".38" filter="url(#bl2)"/>
<path d="M848 505L853 480L880 469L923 472L925 482L905 480L870 483L857 505z" fill="#e2b59d" filter="url(#bl2)"/>
<path d="M980 510L1013 503L1053 503L1063 518L1050 513L1013 511z" fill="#e2b59d" filter="url(#bl2)"/>
<!-- eyes -->
<path d="M873 520Q886 503 903 505Q915 510 917 530Q895 532 873 520z" fill="#fff"/>
<g clip-path="url(#eL)"><circle cx="896" cy="517" r="14" fill="url(#iris)"/><circle cx="896" cy="517" r="5" fill="#0d0d0d"/></g>
<path d="M873 520Q886 503 903 505Q915 510 917 530" fill="none" stroke="#6a5a54" stroke-width="1"/>
<path d="M987 533Q1000 518 1020 518Q1028 524 1032 533Q1010 541 987 533z" fill="#fff"/>
<g clip-path="url(#eR)"><circle cx="1009" cy="527" r="14" fill="url(#iris)"/><circle cx="1009" cy="527" r="5" fill="#0d0d0d"/></g>
<!-- nose -->
<ellipse cx="948" cy="586" rx="30" ry="6" fill="#cf8a6f" opacity=".7" filter="url(#bl2)"/>
<ellipse cx="920" cy="574" rx="5" ry="9" fill="#e0a186" opacity=".55" filter="url(#bl2)"/><ellipse cx="977" cy="574" rx="5" ry="9" fill="#e0a186" opacity=".55" filter="url(#bl2)"/>
<path d="M918 576Q925 555 948 548Q972 555 978 576Q975 584 963 580Q948 590 932 581Q920 584 918 576z" fill="#f9c9ad"/>
<path d="M918 576Q920 584 932 581Q948 590 963 580Q975 584 978 576" fill="none" stroke="#c48a70" stroke-width="1.300"/>
<!-- mouth -->
<path d="M905 609Q925 600 937 602Q947 605 957 602Q975 604 986 612Q950 616 905 609z" fill="#d58f83"/>
<path d="M906 612Q950 617 988 613Q974 633 940 631Q916 629 906 612z" fill="#e2a192"/>
<path d="M894 603Q905 610 915 612Q950 616 996 611" fill="none" stroke="#8a4e44" stroke-width="1.100"/>
<path d="M922 613h38" stroke="#fff" stroke-width="1.300" stroke-dasharray="3 3"/>
<!-- hair -->
<path d="M887 350L970 335L1048 362L1058 393L1048 430L1013 445L998 450L982 423L937 447L930 437L897 447L880 450L858 458L843 460L832 450L840 420L877 373z" fill="#a99d8d" filter="url(#hairf)"/>
<g fill="none" stroke-width="3" opacity=".55">
<path d="M900 365Q870 395 855 440" stroke="#8d8172"/><path d="M935 360Q900 395 885 435" stroke="#c5bbae"/><path d="M960 355Q930 395 925 430" stroke="#92867a"/><path d="M985 360Q960 395 945 430" stroke="#cfc5b8"/><path d="M1010 362Q985 390 990 430" stroke="#c5bbae"/><path d="M1035 372Q1015 400 1015 440" stroke="#94887a"/><path d="M1048 390Q1040 415 1025 438" stroke="#c0b5a7"/><path d="M875 395Q860 420 850 450" stroke="#c0b5a7"/>
</g>
</g>
<text x="758" y="944" style="fill:#fff;font-size:11px" textLength="27" lengthAdjust="spacingAndGlyphs">persp</text>

<!-- Left toolbox -->
<path d="M17 163L33 178L26 178L30 187L26 189L22 180L17 186z" fill="#c6c6c6"/>
<ellipse cx="19" cy="212" rx="9" ry="11" class="c" stroke-dasharray="5 3" transform="rotate(40 19 212)" style="stroke-width:2"/><path d="M23 205L35 218L29 218L32 226L28 227L25 220L21 224z" fill="#c6c6c6"/>
<ellipse cx="18" cy="252" rx="9" ry="11" class="c" stroke-dasharray="5 3" transform="rotate(-45 18 252)" style="stroke-width:2"/><path d="M20 253L35 237L37 239L25 256Q20 262 15 258z" fill="#c6c6c6"/>
<rect x="4" y="269" width="36" height="36" rx="2" fill="#5285a6"/><rect x="16" y="281" width="12" height="12" fill="#d4d4d4" stroke="#333"/><path d="M22 272l5 5h-10zM22 302l5-5h-10zM7 287l5-5v10zM37 287l-5-5v10z" fill="none" stroke="#4fc0c8"/>
<path d="M28 337A14.500 14.500 0 1 1 34 319" fill="none" stroke="#4fb0b8" stroke-width="1.500"/><path d="M21 315l8 9-8 9-8-9z" fill="#d4d4d4"/><path d="M31 323l6 0-3 5z" fill="#4fb0b8"/>
<rect x="10.500" y="348.500" width="24" height="24" fill="none" stroke="#4fb0b8" stroke-dasharray="4 3"/><rect x="10" y="362" width="11" height="11" fill="#d4d4d4"/><path d="M19 359h6v5" fill="none" stroke="#4fb0b8" stroke-width="1.500"/>
<path d="M4 422H40" stroke="#8a8a8a" stroke-width="2"/>
<rect x="8" y="432" width="28" height="28" fill="#c4c4c4"/><rect x="10" y="434" width="24" height="24" fill="#444"/><path d="M22 439l3.500 3.500-3.500 3.500-3.500-3.500zM15 443l3.500 3-3.500 3-3.500-3zM29 443l3.500 3-3.500 3-3.500-3zM22 447l3.500 3-3.500 3-3.500-3z" fill="#ccc"/>
<g fill="none" stroke="#c4c4c4"><path d="M8.500 469.500h12v12h-12zM8.500 484.500h12v12h-12zM23.500 484.500h12v12h-12zM11 475.500h7M14.500 472v7M11 490.500h7M14.500 487v7M26 490.500h7M29.500 487v7"/></g>
<rect x="23" y="469" width="13" height="13" fill="#c4c4c4"/><path d="M29.500 473l3 2-3 2-3-2z" fill="#333"/>
<rect x="8.500" y="506.500" width="12" height="27" fill="none" stroke="#c4c4c4"/><path d="M11 516h7M11 519h7M11 522h7M11 525h7" stroke="#c4c4c4"/><rect x="23" y="506" width="13" height="28" fill="#c4c4c4"/><path d="M29.500 518l3.500 2-3.500 2-3.500-2z" fill="#333"/>
<rect x="8" y="543" width="28" height="13" fill="#c4c4c4"/><path d="M22 547l4 2.500-4 2.500-4-2.500z" fill="#333"/><rect x="8.500" y="558.500" width="27" height="12" fill="none" stroke="#c4c4c4"/><path d="M12 564h18" stroke="#ccc"/><path d="M20 567q3-7 7-2t7-1" stroke="#4fb0b8" fill="none"/>
<rect x="8.500" y="580.500" width="12" height="27" fill="none" stroke="#c4c4c4"/><path d="M11 584h7M11 588h7M11 592h7M11 600h7" stroke="#c4c4c4" stroke-width="2" stroke-dasharray="2 1"/><rect x="23" y="580" width="13" height="28" fill="#c4c4c4"/><path d="M29.500 592l3.500 2-3.500 2-3.500-2z" fill="#333"/>
<rect x="8" y="616" width="13" height="13" fill="#c4c4c4"/><path d="M14.500 620l4 2.500-4 2.500-4-2.500z" fill="#333"/><rect x="23.500" y="616.500" width="12" height="12" fill="none" stroke="#c4c4c4"/><path d="M26 619h6v3h-6zM28 624h5" stroke="#ccc" fill="none"/><rect x="8.500" y="632.500" width="27" height="12" fill="none" stroke="#c4c4c4"/><path d="M12 638h18" stroke="#ccc"/><path d="M20 641q3-7 7-2t7-1" stroke="#4fb0b8" fill="none"/>
<rect x="6.500" y="651.500" width="29" height="29" fill="#3f3f3f" stroke="#2b2b2b"/><path d="M19 665h6l-3 3z" fill="#ccc"/>
<path d="M21 919L36 932L38 948L32 948L31 938L21 948L11 938L10 948L6 948L7 932z" fill="url(#logo)"/><path d="M13 930L21 942L29 930" fill="none" stroke="#0e6a72" stroke-width="2"/>

<!-- Timeline -->
<path class="h" d="M9 958v28M12 958v28"/>
<rect x="17" y="958" width="26" height="28" fill="#2b2b2b"/>
<rect x="26" y="958" width="11" height="28" fill="#5a5a5a"/>
<text x="27" y="985" style="fill:#ddd;font-size:11px">1</text>
<rect x="458" y="952" width="1060" height="2" fill="#333"/>
<rect x="458" y="958" width="1186" height="28" fill="#2b2b2b"/>
<g stroke="#a6a6a6" stroke-width="1"><path d="M483.500 971v15M550.500 971v15M617.500 971v15M684.500 971v15M751.500 971v15M819.500 971v15M886.500 971v15M953.500 971v15M1019.500 971v15M1087.500 971v15M1154.500 971v15M1221.500 971v15M1289.500 971v15M1356.500 971v15M1423.500 971v15M1490.500 971v15M1557.500 971v15M1625.500 971v15"/></g>
<g>
<text class="n" x="484" y="968">35</text><text class="n" x="551" y="968">40</text><text class="n" x="618" y="968">45</text><text class="n" x="685" y="968">50</text><text class="n" x="752" y="968">55</text><text class="n" x="820" y="968">60</text><text class="n" x="887" y="968">65</text><text class="n" x="954" y="968">70</text><text class="n" x="1020" y="968">75</text><text class="n" x="1088" y="968">80</text><text class="n" x="1155" y="968">85</text><text class="n" x="1222" y="968">90</text><text class="n" x="1290" y="968">95</text><text class="n" x="1357" y="968">100</text><text class="n" x="1424" y="968">105</text><text class="n" x="1491" y="968">110</text><text class="n" x="1558" y="968">115</text><text class="n" x="1626" y="968">120</text>
</g>
<rect x="1652" y="964" width="67" height="18" rx="2" fill="#2b2b2b"/><text x="1659" y="979">1</text>
<g fill="#c4c4c4">
<path d="M1730 965h2v14h-2zM1740 965v14l-7-7zM1746 965v14l-7-7z"/>
<path d="M1755 965h2v14h-2zM1767 965v14l-9-7z"/>
<path d="M1788 965v14l-9-7z"/><rect x="1777" y="963" width="2" height="18" fill="#d98a3c"/>
<path d="M1814 962v20l-13-10z"/>
<path d="M1824 962v20l13-10z"/>
<path d="M1848 965v14l9-7z"/><rect x="1857" y="963" width="2" height="18" fill="#d98a3c"/>
<path d="M1870 965v14l9-7zM1880 965h2v14h-2z"/>
<path d="M1892 965v14l7-7zM1899 965v14l7-7zM1906 965h2v14h-2z"/>
</g>

<!-- Range -->
<path class="h" d="M9 995v22M12 995v22"/>
<rect x="18" y="995" width="68" height="23" rx="2" fill="#2b2b2b"/><text x="24" y="1011">1</text>
<rect x="94" y="995" width="68" height="23" rx="2" fill="#2b2b2b"/><text x="100" y="1011">1</text>
<rect x="176" y="995" width="1274" height="23" fill="#3a3a3a"/>
<rect x="176" y="997" width="770" height="19" rx="3" fill="#646464"/>
<rect x="181" y="999" width="12" height="15" rx="2" fill="#a0a0a0"/><rect x="929" y="999" width="13" height="15" rx="2" fill="#a0a0a0"/>
<text x="197" y="1011">1</text><text x="907" y="1011">120</text>
<rect x="1456" y="995" width="67" height="23" rx="2" fill="#2b2b2b"/><text x="1461" y="1011">120</text>
<rect x="1532" y="995" width="68" height="23" rx="2" fill="#2b2b2b"/><text x="1537" y="1011">200</text>
<path d="M1607 1002h8l-4 5z" fill="none" stroke="#aaa"/>
<rect x="1623.500" y="994.500" width="100" height="24" fill="none" stroke="#555"/><text x="1629" y="1011" textLength="74" lengthAdjust="spacingAndGlyphs">No Anim Layer</text>
<path d="M1736 1002h8l-4 5z" fill="none" stroke="#aaa"/>
<rect x="1752.500" y="994.500" width="100" height="24" fill="none" stroke="#555"/><text x="1757" y="1011" textLength="86" lengthAdjust="spacingAndGlyphs">No Character Set</text>
<circle cx="1871" cy="1006" r="7" fill="none" stroke="#bbb" stroke-dasharray="6 2"/><path d="M1871 1000v12M1867 1006h8" stroke="#d9853c" stroke-width="1.500"/>
<circle cx="1893" cy="1000" r="3" fill="none" stroke="#ccc"/><circle cx="1902" cy="1000" r="2" fill="#d9853c"/><path d="M1901 1003l-3 7-4 5M1899 1009l5 6M1901 1004l6 3" stroke="#d9853c" stroke-width="2.200" fill="none"/>

<!-- MEL -->
<path class="h" d="M9 1027v23M12 1027v23"/>
<text x="28" y="1044" style="fill:#ddd" textLength="21" lengthAdjust="spacingAndGlyphs">MEL</text>
<rect x="63" y="1028" width="618" height="23" rx="1" fill="#2b2b2b"/>
<rect x="687" y="1028" width="1199" height="24" fill="#2b2b2b"/>
<rect x="1893" y="1030" width="18" height="18" fill="#bbb"/><rect x="1893" y="1033" width="18" height="1" fill="#444"/><text x="1896" y="1045" style="fill:#333;font-size:9px">{ i }</text>
<path d="M0 1056.500H1920" stroke="#2f2f2f"/>
<rect x="0" y="1078" width="1920" height="2" fill="#2b2b2b"/><rect x="294" y="1078" width="44" height="2" fill="#555"/>
<rect x="8" y="1053" width="144" height="25" fill="#fff"/>
<rect x="16" y="1059" width="15" height="15" fill="url(#logo)"/>
<path d="M34 1063h6v9h-6zM36 1063v-3h6v9h-2" fill="none" stroke="#777"/>
<rect x="78.500" y="1060.500" width="10" height="11" fill="none" stroke="#666"/>
<path d="M124 1060l10 12M134 1060l-10 12" stroke="#666"/>

<!-- Right panel -->
<path d="M1515 141V954" stroke="#353535"/>
<path class="h" d="M1525 150h100M1525 153h100M1766 150h96M1766 153h96"/>
<text x="1644" y="156" style="fill:#b8b8b8;font-size:10px" textLength="103" lengthAdjust="spacingAndGlyphs">Channel Box / Layer Editor</text>
<rect x="1871" y="145" width="12" height="12" rx="2" fill="#2f2f2f" stroke="#666"/><path d="M1874 151h4v4h-4zM1876 149h4v4" fill="none" stroke="#ccc"/>
<rect x="1885" y="145" width="12" height="12" rx="2" fill="#2f2f2f" stroke="#666"/><path d="M1887 147l8 8M1895 147l-8 8" stroke="#ddd" stroke-width="1.500"/>
<path d="M1846 171l-8 2" stroke="#2b50d6" stroke-width="3"/><path d="M1846 171v-8" stroke="#43b649" stroke-width="3"/><path d="M1846 171l7 6" stroke="#c22" stroke-width="3"/>
<circle cx="1866" cy="171" r="7" fill="#506a52"/><path d="M1866 164a7 7 0 0 0 0 14" fill="#2d4a30"/>
<path d="M1881 178l14-15" stroke="#5e4b4b" stroke-width="2"/>
<rect x="1899" y="141" width="21" height="159" fill="#6b6b6b"/><rect x="1899" y="300" width="21" height="103" fill="#383838"/>
<text transform="translate(1904 155) rotate(90)" style="fill:#ddd;font-size:12.500px" textLength="133" lengthAdjust="spacingAndGlyphs">Channel Box / Layer Editor</text>
<text transform="translate(1904 312) rotate(90)" style="fill:#a0a0a0;font-size:12.500px" textLength="80" lengthAdjust="spacingAndGlyphs">Attribute Editor</text>
<text x="1532" y="197" textLength="47" lengthAdjust="spacingAndGlyphs">Channels</text><text x="1594" y="197">Edit</text><text x="1629" y="197" textLength="33" lengthAdjust="spacingAndGlyphs">Object</text><text x="1678" y="197" textLength="29" lengthAdjust="spacingAndGlyphs">Show</text>
<text x="1525" y="217" style="font-weight:bold" textLength="226" lengthAdjust="spacingAndGlyphs">Child_in_Fall_Clothes_body_detail_MAT_SM</text>
<rect x="1884" y="204" width="12" height="514" fill="#363636"/><rect x="1886" y="217" width="8" height="486" rx="4" fill="#585858"/>
<path d="M1885 212h10l-5-5zM1885 709h10l-5 5z" fill="#ccc"/>
<rect x="1819" y="220" width="64" height="463" fill="url(#rows)"/>
<rect x="1819" y="236" width="64" height="15" fill="#f3f3a6"/><rect x="1819" y="252" width="64" height="15" fill="#f3f3a6"/><rect x="1819" y="268" width="64" height="15" fill="#f3f3a6"/>
<g style="text-anchor:end" class="lb">
<text class="lb" x="1817" y="233">Diffuse</text><text class="lb" x="1817" y="249">Color R</text><text class="lb" x="1817" y="265">Color G</text><text class="lb" x="1817" y="281">Color B</text><text class="lb" x="1817" y="297">Transparency R</text><text class="lb" x="1817" y="313">Transparency G</text><text class="lb" x="1817" y="329">Transparency B</text><text class="lb" x="1817" y="345">Ambient Color R</text><text class="lb" x="1817" y="361">Ambient Color G</text><text class="lb" x="1817" y="377">Ambient Color B</text><text class="lb" x="1817" y="393">Incandescence R</text><text class="lb" x="1817" y="409">Incandescence G</text><text class="lb" x="1817" y="425">Incandescence B</text><text class="lb" x="1817" y="441">Translucence</text><text class="lb" x="1817" y="457">Translucence Focus</text><text class="lb" x="1817" y="473">Translucence Depth</text><text class="lb" x="1817" y="489">Glow Intensity</text><text class="lb" x="1817" y="505">Material Alpha Gain</text><text class="lb" x="1817" y="521">Surface Thickness</text><text class="lb" x="1817" y="537">Shadow Attenuation</text><text class="lb" x="1817" y="553">Light Absorbance</text><text class="lb" x="1817" y="569">Matte Opacity</text><text class="lb" x="1817" y="585">Specular Color R</text><text class="lb" x="1817" y="601">Specular Color G</text><text class="lb" x="1817" y="617">Specular Color B</text><text class="lb" x="1817" y="633">Reflected Color R</text><text class="lb" x="1817" y="649">Reflected Color G</text><text class="lb" x="1817" y="665">Reflected Color B</text><text class="lb" x="1817" y="681">Cosine Power</text>
</g>
<g>
<text class="v" x="1824" y="232">0.8</text>
<text x="1824" y="248" style="fill:#111">0</text><text x="1824" y="264" style="fill:#111">0</text><text x="1824" y="280" style="fill:#111">0</text>
<text class="v" x="1824" y="296">1</text><text class="v" x="1824" y="312">1</text><text class="v" x="1824" y="328">1</text><text class="v" x="1824" y="344">0</text><text class="v" x="1824" y="360">0</text><text class="v" x="1824" y="376">0</text><text class="v" x="1824" y="392">0</text><text class="v" x="1824" y="408">0</text><text class="v" x="1824" y="424">0</text><text class="v" x="1824" y="440">0</text><text class="v" x="1824" y="456">0.5</text><text class="v" x="1824" y="472">0.5</text><text class="v" x="1824" y="488">0</text><text class="v" x="1824" y="504">1</text><text class="v" x="1824" y="520">0</text><text class="v" x="1824" y="536">0.5</text><text class="v" x="1824" y="552">0</text><text class="v" x="1824" y="568">1</text><text class="v" x="1824" y="584">0</text><text class="v" x="1824" y="600">0</text><text class="v" x="1824" y="616">0</text><text class="v" x="1824" y="632">0</text><text class="v" x="1824" y="648">0</text><text class="v" x="1824" y="664">0</text><text class="v" x="1824" y="680">20</text>
</g>
<text x="1525" y="697" style="font-weight:bold;font-size:11px">INPUTS</text>
<text x="1534" y="713" style="font-weight:bold;font-size:11px">diffuse_map</text>
<path d="M1522 721H1898" stroke="#2f2f2f"/>
<!-- layer editor -->
<rect x="1523.500" y="751.500" width="373" height="197" fill="#444" stroke="#2f2f2f"/>
<path d="M1530 951.500H1901" stroke="#333"/>
<rect x="1523" y="730" width="61" height="22" rx="2" fill="#666"/><rect x="1585" y="730" width="60" height="21" rx="2" fill="#393939"/><rect x="1646" y="730" width="48" height="21" rx="2" fill="#393939"/>
<text x="1535" y="745" style="fill:#ddd" textLength="37" lengthAdjust="spacingAndGlyphs">Display</text><text class="t" x="1596" y="746" textLength="37" lengthAdjust="spacingAndGlyphs">Render</text><text class="t" x="1657" y="746">Anim</text>
<text x="1534" y="767" textLength="30" lengthAdjust="spacingAndGlyphs">Layers</text><text x="1580" y="767" textLength="41" lengthAdjust="spacingAndGlyphs">Options</text><text x="1637" y="767">Help</text>
<g fill="#ccc"><path d="M1799 785l6-4h5v8h-5z"/><path d="M1822 785l6-4h5v8h-5z"/><path d="M1849 785l7-4h6l-3 7-6 1z"/><path d="M1873 785l6-4h5l-3 7-4 1z"/></g>
<g fill="#4fa9bd"><path d="M1811 783l3-3 3 3h-2v5h-2v-5z"/><path d="M1834 786l3 3 3-3h-2v-5h-2v5z"/><path d="M1860 778h2v2h2v2h-2v2h-2v-2h-2v-2h2z"/><circle cx="1883" cy="782" r="3"/></g>
<rect x="1527" y="799" width="365" height="149" fill="#2b2b2b"/>
<rect x="1528" y="840" width="350" height="20" fill="#5484a9"/>
<g fill="#333" stroke="#1c1c1c">
<rect x="1531.500" y="803.500" width="19" height="13" rx="3"/><rect x="1554.500" y="803.500" width="19" height="13" rx="3"/><rect x="1577.500" y="803.500" width="19" height="13" rx="3"/>
<rect x="1531.500" y="823.500" width="19" height="13" rx="3"/><rect x="1554.500" y="823.500" width="19" height="13" rx="3"/><rect x="1577.500" y="823.500" width="19" height="13" rx="3"/>
<rect x="1531.500" y="863.500" width="19" height="13" rx="3"/><rect x="1554.500" y="863.500" width="19" height="13" rx="3"/><rect x="1577.500" y="863.500" width="19" height="13" rx="3"/>
<rect x="1531.500" y="883.500" width="19" height="13" rx="3"/><rect x="1554.500" y="883.500" width="19" height="13" rx="3"/><rect x="1577.500" y="883.500" width="19" height="13" rx="3"/>
</g>
<g fill="#5484a9" stroke="#2f4f68"><rect x="1531.500" y="843.500" width="19" height="13" rx="3"/><rect x="1554.500" y="843.500" width="19" height="13" rx="3"/><rect x="1577.500" y="843.500" width="19" height="13" rx="3"/></g>
<rect x="1600" y="803" width="16" height="14" fill="#04401a"/><rect x="1600" y="823" width="16" height="14" fill="#0000ff"/><rect x="1600" y="843" width="16" height="14" fill="#0000ff"/><rect x="1600" y="863" width="16" height="14" fill="#00005e"/><rect x="1600" y="883" width="16" height="14" fill="#96002a"/>
<g>
<text class="k" x="1537" y="815">V</text><text class="k" x="1560" y="815">P</text><text class="k" x="1619" y="814">Helpers</text>
<text class="k" x="1537" y="835">V</text><text class="k" x="1560" y="835">P</text><text class="k" x="1619" y="834">pasted__Controllers</text>
<text x="1560" y="855" style="fill:#32566f;font-size:11.300px">P</text><text x="1619" y="854" style="fill:#111;font-size:11.300px">Controllers</text>
<text class="k" x="1537" y="875">V</text><text class="k" x="1560" y="875">P</text><text class="k" x="1619" y="874">Bones</text>
<text class="k" x="1537" y="895">V</text><text class="k" x="1560" y="895">P</text><text class="k" x="1619" y="894">Child_in_Fall_Clothes_Rigged</text>
</g>

<!-- Outliner -->
<rect x="43" y="187" width="415" height="808" fill="#444" stroke="#333"/>
<rect x="43" y="187" width="415" height="30" fill="#fff"/>
<rect x="51" y="194" width="16" height="15" fill="url(#logo)"/><path d="M53 209L59 197L65 209M56 209L59 203L62 209" fill="none" stroke="#0d6a70"/>
<text x="72" y="207" style="fill:#7a7a7a;font-size:13.500px">Outliner</text>
<path d="M339 201.500H349" stroke="#888"/><rect x="384.500" y="196.500" width="9" height="9" fill="none" stroke="#777"/><path d="M431 196l10 10M441 196l-10 10" stroke="#777"/>
<text x="53" y="232" textLength="37" lengthAdjust="spacingAndGlyphs">Display</text><text x="105" y="232" textLength="29" lengthAdjust="spacingAndGlyphs">Show</text><text x="149" y="232">Help</text>
<rect x="72" y="240" width="383" height="18" rx="2" fill="#2b2b2b"/>
<rect x="52.500" y="245.500" width="11" height="13" fill="none" stroke="#666" stroke-dasharray="3 2"/>
<rect x="46" y="266" width="409" height="707" fill="#2b2b2b"/>
<rect x="445" y="266" width="10" height="707" fill="#333"/>
<rect x="446" y="543" width="9" height="418" rx="4.500" fill="#585858"/>
<path d="M445 274h10l-5-5zM445 964h10l-5 6z" fill="#aaa"/>
<rect x="46" y="973" width="409" height="15" fill="#3a3a3a"/>
<rect x="59" y="975" width="371" height="10" rx="5" fill="#636363"/>
<path d="M54 975v10l-4-5zM435 975v10l4-5z" fill="#bbb"/>
<g>
<use href="#m" x="98" y="276"/><use href="#m" x="98" y="296"/><use href="#m" x="98" y="316"/><use href="#m" x="98" y="336"/><use href="#m" x="98" y="356"/><use href="#m" x="98" y="376"/><use href="#m" x="98" y="396"/><use href="#m" x="98" y="416"/><use href="#m" x="98" y="436"/><use href="#m" x="98" y="456"/><use href="#m" x="98" y="476"/><use href="#m" x="98" y="496"/><use href="#m" x="98" y="516"/><use href="#m" x="98" y="536"/><use href="#m" x="98" y="556"/><use href="#m" x="98" y="576"/><use href="#m" x="98" y="596"/><use href="#m" x="98" y="616"/><use href="#m" x="98" y="636"/><use href="#m" x="98" y="656"/><use href="#m" x="98" y="676"/><use href="#m" x="98" y="696"/><use href="#m" x="98" y="716"/><use href="#m" x="98" y="736"/><use href="#m" x="98" y="756"/><use href="#m" x="98" y="776"/><use href="#m" x="98" y="796"/><use href="#m" x="98" y="816"/>
<use href="#ik" x="98" y="836"/><use href="#ik" x="98" y="856"/><use href="#ik" x="98" y="876"/><use href="#ik" x="98" y="896"/>
<use href="#set" x="97" y="936"/><use href="#set" x="97" y="956"/>
</g>
<rect x="65.500" y="909.500" width="13" height="13" fill="none" stroke="#bbb"/><path d="M68 916h8M72 912v8" stroke="#ddd" stroke-width="1.500"/>
<path d="M93 909h14l-5 18H90z" fill="#eee"/><path d="M90 917h12M97 910l-3 14" stroke="#c22" stroke-width="2"/>
<g>
<text class="d" x="109" y="280">M_frown_L</text><text class="d" x="109" y="300">M_brow_sorow_R</text><text class="d" x="109" y="320">M_brow_sorow_L</text><text class="d" x="109" y="340">M__anger</text><text class="d" x="109" y="360">M_fright</text><text class="d" x="109" y="380" textLength="77" lengthAdjust="spacingAndGlyphs">M_smile__close</text><text class="d" x="109" y="400">M__O_O_O</text><text class="d" x="109" y="420">M_I_E</text><text class="d" x="109" y="440">M_U_U_U</text><text class="d" x="109" y="460">M_B_M_P</text><text class="d" x="109" y="480">M_D_S_T_Z</text><text class="d" x="109" y="500">M_F_V</text><text class="d" x="109" y="520">M_CH_SH_J</text><text class="d" x="109" y="540">M_Th_Th_Th</text><text class="d" x="109" y="560">M_Q_W</text><text class="d" x="109" y="580">M_smile_open</text><text class="d" x="109" y="600" textLength="103" lengthAdjust="spacingAndGlyphs">lashes_eyes_close_R</text><text class="d" x="109" y="620" textLength="101" lengthAdjust="spacingAndGlyphs">lashes_eyes_close_L</text><text class="d" x="109" y="640" textLength="91" lengthAdjust="spacingAndGlyphs">lashes_eyes_up_R</text><text class="d" x="109" y="660" textLength="88" lengthAdjust="spacingAndGlyphs">lashes_eyes_up_L</text><text class="d" x="109" y="680" textLength="97" lengthAdjust="spacingAndGlyphs">lashes_brow_up_R</text><text class="d" x="109" y="700" textLength="94" lengthAdjust="spacingAndGlyphs">lashes_brow_up_L</text><text class="d" x="109" y="720" textLength="82" lengthAdjust="spacingAndGlyphs">lashes_frown_R</text><text class="d" x="109" y="740" textLength="80" lengthAdjust="spacingAndGlyphs">lashes_frown_L</text><text class="d" x="109" y="760" textLength="97" lengthAdjust="spacingAndGlyphs">lashes_smile_open</text><text class="d" x="109" y="780" textLength="100" lengthAdjust="spacingAndGlyphs">lashes_smile__close</text><text class="d" x="109" y="800" textLength="69" lengthAdjust="spacingAndGlyphs">lashes_anger</text><text class="d" x="109" y="820" textLength="67" lengthAdjust="spacingAndGlyphs">lashes_fright</text>
<text class="o" x="109" y="840">ikHandle1</text><text class="o" x="109" y="860">ikHandle2</text><text class="o" x="109" y="880">ikHandle3</text><text class="o" x="109" y="900">ikHandle4</text><text class="o" x="109" y="920">group</text><text class="o" x="109" y="940">defaultLightSet</text><text class="o" x="109" y="960">defaultObjectSet</text>
</g>
</svg>
</body></html>
